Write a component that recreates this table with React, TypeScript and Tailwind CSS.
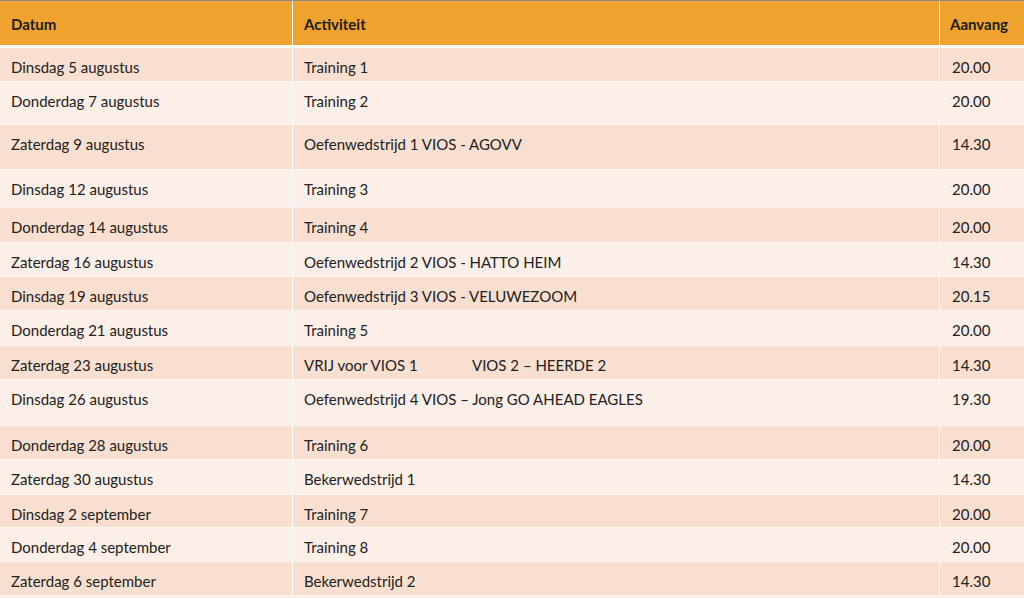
type Row = {
  datum: string;
  activiteit: React.ReactNode;
  aanvang: string;
  h: string;
};

const rows: Row[] = [
  { datum: "Dinsdag 5 augustus", activiteit: "Training 1", aanvang: "20.00", h: "h-[34px]" },
  { datum: "Donderdag 7 augustus", activiteit: "Training 2", aanvang: "20.00", h: "h-[43px]" },
  { datum: "Zaterdag 9 augustus", activiteit: "Oefenwedstrijd 1 VIOS - AGOVV", aanvang: "14.30", h: "h-[45px]" },
  { datum: "Dinsdag 12 augustus", activiteit: "Training 3", aanvang: "20.00", h: "h-[38px]" },
  { datum: "Donderdag 14 augustus", activiteit: "Training 4", aanvang: "20.00", h: "h-[35px]" },
  { datum: "Zaterdag 16 augustus", activiteit: "Oefenwedstrijd 2 VIOS - HATTO HEIM", aanvang: "14.30", h: "h-[34px]" },
  { datum: "Dinsdag 19 augustus", activiteit: "Oefenwedstrijd 3 VIOS - VELUWEZOOM", aanvang: "20.15", h: "h-[34px]" },
  { datum: "Donderdag 21 augustus", activiteit: "Training 5", aanvang: "20.00", h: "h-[35px]" },
  {
    datum: "Zaterdag 23 augustus",
    activiteit: (
      <>
        <span className="inline-block w-[168px]">VRIJ voor VIOS 1</span>
        <span>VIOS 2 – HEERDE 2</span>
      </>
    ),
    aanvang: "14.30",
    h: "h-[34px]",
  },
  { datum: "Dinsdag 26 augustus", activiteit: "Oefenwedstrijd 4 VIOS – Jong GO AHEAD EAGLES", aanvang: "19.30", h: "h-[46px]" },
  { datum: "Donderdag 28 augustus", activiteit: "Training 6", aanvang: "20.00", h: "h-[34px]" },
  { datum: "Zaterdag 30 augustus", activiteit: "Bekerwedstrijd 1", aanvang: "14.30", h: "h-[35px]" },
  { datum: "Dinsdag 2 september", activiteit: "Training 7", aanvang: "20.00", h: "h-[33px]" },
  { datum: "Donderdag 4 september", activiteit: "Training 8", aanvang: "20.00", h: "h-[34px]" },
  { datum: "Zaterdag 6 september", activiteit: "Bekerwedstrijd 2", aanvang: "14.30", h: "h-[34px]" },
];

const App = () => {
  return (
    <div className="w-[1024px] h-[598px] overflow-hidden bg-[#fcefe8] font-['Lato',sans-serif] text-[15px] text-[#222]">
      <div className="border-t border-[#8a8a8a]" />
      {/* header */}
      <div className="grid grid-cols-[293px_647px_1fr] h-[47px] bg-[#efa32e] font-bold text-[#1c1c1c] border-b-[3px] border-white">
        <div className="pl-[11px] pt-[12px] border-r border-white">Datum</div>
        <div className="pl-[11px] pt-[12px] border-r border-white">Activiteit</div>
        <div className="pl-[10px] pt-[12px]">Aanvang</div>
      </div>
      {rows.map((r, i) => (
        <div
          key={i}
          className={`grid grid-cols-[293px_647px_1fr] ${r.h} ${
            i % 2 === 0 ? "bg-[#f8dfcf]" : "bg-[#fcefe8]"
          } border-b border-[#fdf6f2]`}
        >
          <div className="pl-[11px] pt-[8px] border-r border-white">{r.datum}</div>
          <div className="pl-[11px] pt-[8px] border-r border-white">{r.activiteit}</div>
          <div className="pl-[12px] pt-[8px]">{r.aanvang}</div>
        </div>
      ))}
    </div>
  );
};

export default App;
